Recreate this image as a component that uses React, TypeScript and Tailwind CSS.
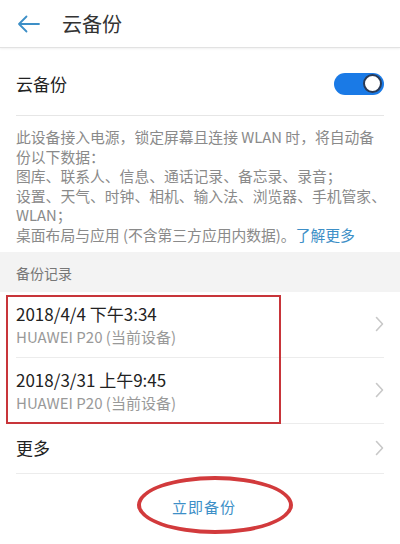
import React from 'react';

const Chevron: React.FC = () => (
  <svg width="9" height="16" viewBox="0 0 9 16" fill="none" className="shrink-0">
    <path d="M1.5 1.5 L7.5 8 L1.5 14.5" stroke="#c8c8c8" strokeWidth="1.6" strokeLinecap="round" strokeLinejoin="round" />
  </svg>
);

const records = [
  { date: '2018/4/4 下午3:34', device: 'HUAWEI P20 (当前设备)' },
  { date: '2018/3/31 上午9:45', device: 'HUAWEI P20 (当前设备)' },
];

const descLines = [
  '此设备接入电源，锁定屏幕且连接 WLAN 时，将自动备',
  '份以下数据：',
  '图库、联系人、信息、通话记录、备忘录、录音；',
  '设置、天气、时钟、相机、输入法、浏览器、手机管家、',
  'WLAN；',
];

export default function App() {
  return (
    <div
      className="w-[400px] h-[544px] bg-white overflow-hidden text-[#222]"
      style={{ fontFamily: '"Noto Sans CJK SC", "Noto Sans", sans-serif' }}
    >
      {/* header */}
      <div className="h-[48px] flex items-center border-b border-[#e2e2e2] shadow-[0_1px_2px_rgba(0,0,0,0.06)]">
        <svg width="24" height="18" viewBox="0 0 24 18" fill="none" className="ml-[17px]">
          <path d="M22 9 H2 M9.5 1.5 L2 9 L9.5 16.5" stroke="#3d8fc7" strokeWidth="1.8" strokeLinecap="round" strokeLinejoin="round" />
        </svg>
        <span className="ml-[21px] text-[20px] text-[#333]">云备份</span>
      </div>

      {/* switch row */}
      <div className="h-[67px] flex items-center justify-between px-4 pt-[4px]">
        <span className="text-[17px]">云备份</span>
        <div className="w-[50px] h-[22px] rounded-full bg-[#1a7ae6] flex items-center justify-end pr-[2px]">
          <div className="w-[19px] h-[19px] rounded-full bg-white border-2 border-[#2a3a55]" />
        </div>
      </div>
      <div className="mx-4 border-b border-[#e6e6e6]" />

      {/* description */}
      <div className="px-4 pt-[11px] pb-[7px] text-[14.8px] leading-[19.6px] text-[#8a8a8a]">
        {descLines.map(l => (
          <div key={l} className="whitespace-nowrap">{l}</div>
        ))}
        <div className="whitespace-nowrap">
          桌面布局与应用 (不含第三方应用内数据)。<span className="text-[#3d8fc7]">了解更多</span>
        </div>
      </div>

      {/* section header */}
      <div className="h-[40px] bg-[#f3f3f3] flex items-center px-4 pt-[4px]">
        <span className="text-[14px] text-[#777]">备份记录</span>
      </div>

      {/* records */}
      <div className="relative">
        {records.map((r, i) => (
          <div key={i} className="mx-4 h-[66px] flex items-center justify-between border-b border-[#ececec]">
            <div className="flex flex-col">
              <span className="text-[17px] leading-[24px] text-[#222]">{r.date}</span>
              <span className="text-[15px] leading-[21px] text-[#999]">{r.device}</span>
            </div>
            <Chevron />
          </div>
        ))}
        <div className="absolute left-[6px] top-[3px] w-[275px] h-[129px] border-2 border-[#c8353a] pointer-events-none" />
      </div>

      <div className="mx-4 h-[50px] flex items-center justify-between border-b border-[#ececec]">
        <span className="text-[17px]">更多</span>
        <Chevron />
      </div>

      {/* backup now */}
      <div className="h-[66px] flex items-center justify-center pl-[8px]">
        <div className="relative">
          <span className="text-[15px] text-[#3d8fc7] tracking-[1px]">立即备份</span>
          <div className="absolute left-[-35px] top-[-18px] w-[156px] h-[58px] rounded-[50%] border-[4px] border-[#d23a3c] pointer-events-none" />
        </div>
      </div>
    </div>
  );
}
